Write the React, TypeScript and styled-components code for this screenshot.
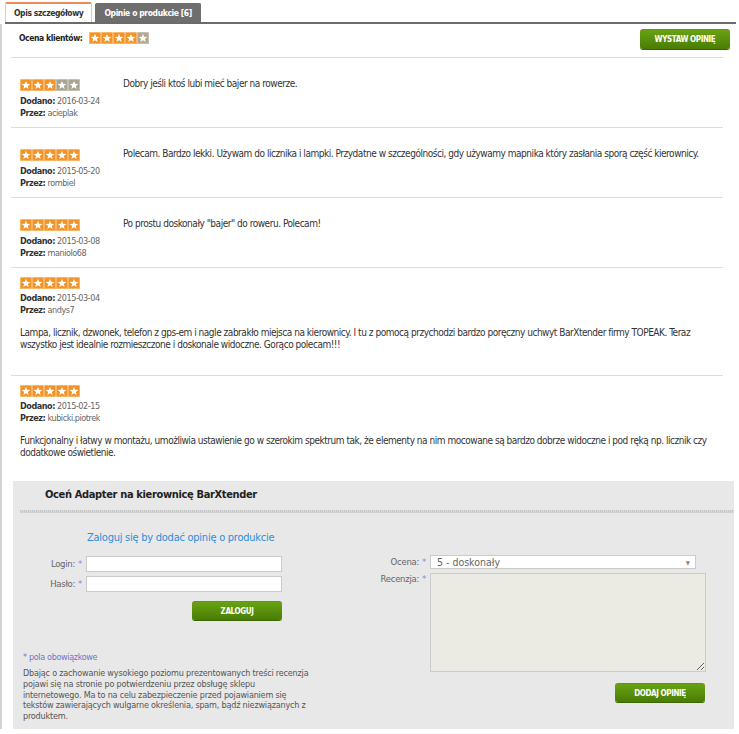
import React from 'react';
import styled, { createGlobalStyle } from 'styled-components';

const FONT = `"DejaVu Sans Condensed", "DejaVu Sans", Verdana, sans-serif`;

const GlobalStyle = createGlobalStyle`
  html, body {
    margin: 0;
    padding: 0;
    background: #fff;
  }
  body {
    font-family: ${FONT};
    font-size: 11px;
    color: #333;
  }
`;

const Page = styled.div`
  width: 739px;
`;

const TabBar = styled.div`
  display: flex;
  align-items: flex-end;
  gap: 3px;
  margin: 0 3px 0 5px;
  padding-top: 2px;
  border-bottom: 2px solid #6b6b6b;
`;

const Tab = styled.div<{ $active?: boolean }>`
  box-sizing: border-box;
  height: ${({ $active }) => ($active ? '20px' : '19px')};
  padding: 0 8px;
  display: flex;
  align-items: center;
  font-size: 8.5px;
  letter-spacing: -0.4px;
  font-weight: bold;
  border-radius: 2px 2px 0 0;
  color: ${({ $active }) => ($active ? '#333' : '#fff')};
  background: ${({ $active }) => ($active ? '#fff' : '#6e6e6e')};
  border: 1px solid ${({ $active }) => ($active ? '#cfcfcf' : '#6e6e6e')};
  border-top: ${({ $active }) => ($active ? '2px solid #ec8a5a' : '1px solid #6e6e6e')};
  border-bottom: none;
`;

const Content = styled.div`
  border-left: 2px solid #d2d2d2;
`;

const Summary = styled.div`
  display: flex;
  align-items: center;
  justify-content: space-between;
  padding: 5px 9px 8px 17px;
`;

const SummaryLeft = styled.div`
  display: flex;
  align-items: center;
  gap: 7px;
  margin-bottom: 3px;
  font-size: 8.5px;
  letter-spacing: -0.4px;
  font-weight: bold;
  color: #222;
`;

const GreenButton = styled.button`
  box-sizing: border-box;
  width: 90px;
  height: ${({ $h }: { $h?: number }) => $h ?? 19}px;
  padding: 0;
  border: none;
  border-top: 1px solid #c8574a;
  border-radius: 3px;
  background: linear-gradient(#67a312, #4a7c05);
  box-shadow: 0 1px 0 #3d6604;
  color: #fff;
  font-family: ${FONT};
  font-size: 8px;
  font-weight: bold;
  letter-spacing: -0.4px;
  cursor: pointer;
`;

const ReviewItem = styled.div<{ $block?: boolean; $last?: boolean }>`
  margin: 0 16px 0 9px;
  padding: ${({ $block, $last }) =>
    $block ? `9px 0 ${$last ? 22 : 24}px 9px` : '21px 0 8px 9px'};
  border-top: 1px solid #dcdcdc;
  display: ${({ $block }) => ($block ? 'block' : 'flex')};
`;

const Meta = styled.div`
  width: 103px;
  flex-shrink: 0;
`;

const MetaLines = styled.div<{ $gap: number }>`
  margin-top: ${({ $gap }) => $gap}px;
`;

const MetaLine = styled.div`
  line-height: 12px;
  font-size: 9px;
  letter-spacing: -0.45px;
  color: #666;

  b {
    color: #333;
  }
`;

const ReviewText = styled.p<{ $block?: boolean }>`
  margin: ${({ $block }) => ($block ? '11px 0 0' : '-1px 0 0')};
  line-height: 12px;
  font-size: 10px;
  letter-spacing: -0.47px;
  color: #333;
`;

const FormBox = styled.section`
  margin: 0 5px 0 11px;
  background: #e8e8e8;
  padding-bottom: 7px;
`;

const FormHeading = styled.h3`
  margin: 0;
  padding-left: 32px;
  height: 29px;
  line-height: 27px;
  font-size: 11px;
  letter-spacing: -0.35px;
  font-weight: bold;
  color: #222;
`;

const Hatch = styled.div`
  margin-left: 7px;
  height: 3px;
  background:
    repeating-linear-gradient(90deg, #c6c6c6 0 1px, #dadada 1px 2px);
`;

const FormBody = styled.div`
  display: grid;
  grid-template-columns: 357px 1fr;
`;

const LeftCol = styled.div`
  padding: 17px 0 0 10px;
`;

const RightCol = styled.div`
  padding-top: 42px;
`;

const LoginTitle = styled.div`
  padding-left: 64px;
  line-height: 16px;
  font-size: 11px;
  letter-spacing: -0.25px;
  color: #2b8edb;
  margin-bottom: 10px;
`;

const FieldRow = styled.div<{ $top?: boolean; $label: number }>`
  display: grid;
  grid-template-columns: ${({ $label }) => $label}px auto;
  align-items: ${({ $top }) => ($top ? 'start' : 'center')};
  column-gap: 4px;
  margin-bottom: 4px;
`;

const FieldLabel = styled.label`
  text-align: right;
  font-size: 9.5px;
  letter-spacing: -0.3px;
  line-height: 12px;
  color: #666;
`;

const Req = styled.span`
  color: #8a8ad8;
  margin-left: 3px;
`;

const TextInput = styled.input`
  box-sizing: border-box;
  width: 196px;
  height: 16px;
  margin: 0;
  border: 1px solid #cbcbcb;
  background: #fff;
  outline: none;
`;

const SelectBox = styled.div`
  box-sizing: border-box;
  width: 266px;
  height: 14px;
  border: 1px solid #cbcbcb;
  background: #fff;
  display: flex;
  align-items: center;
  justify-content: space-between;
  padding: 0 5px 0 6px;
  font-size: 10.5px;
  color: #666;
`;

const Arrow = styled.span`
  font-size: 6px;
  color: #888;
`;

const Review = styled.textarea`
  display: block;
  box-sizing: border-box;
  width: 276px;
  height: 99px;
  margin: 0;
  border: 1px solid #cbcbcb;
  background: #ebeae3;
  outline: none;
`;

const ButtonRow = styled.div<{ $left: number; $top: number }>`
  padding-left: ${({ $left }) => $left}px;
  margin-top: ${({ $top }) => $top}px;
  line-height: 0;
`;

const RequiredNote = styled.div`
  margin-top: 31px;
  line-height: 12px;
  font-size: 9px;
  letter-spacing: -0.35px;
  color: #7474c8;
`;

const Notice = styled.p`
  margin: 5px 0 0;
  white-space: nowrap;
  line-height: 10.8px;
  font-size: 9px;
  letter-spacing: -0.2px;
  color: #555;
`;

const starPoints = (cx: number, cy: number, R: number, r: number) => {
  const pts: string[] = [];
  for (let i = 0; i < 10; i++) {
    const a = -Math.PI / 2 + (i * Math.PI) / 5;
    const rad = i % 2 === 0 ? R : r;
    pts.push(`${(cx + rad * Math.cos(a)).toFixed(2)},${(cy + rad * Math.sin(a)).toFixed(2)}`);
  }
  return pts.join(' ');
};

const Stars: React.FC<{ value: number; muted?: string }> = ({ value, muted = '#a9a391' }) => (
  <svg width="60" height="12" viewBox="0 0 60 12" style={{ display: 'block' }}>
    {[0, 1, 2, 3, 4].map((i) => (
      <g key={i}>
        <rect
          x={i * 12}
          y={0}
          width={12}
          height={12}
          rx={1.5}
          fill={i < value ? '#f39325' : muted}
        />
        <rect
          x={i * 12 + 0.5}
          y={0.5}
          width={11}
          height={11}
          rx={1.5}
          fill="none"
          stroke={i < value ? '#f8b767' : '#c4bfae'}
          strokeWidth={1}
        />
        <polygon points={starPoints(i * 12 + 6, 6.4, 4.6, 1.9)} fill="#fff" />
      </g>
    ))}
  </svg>
);

type ReviewData = {
  value: number;
  date: string;
  author: string;
  text: string;
  block?: boolean;
};

const reviews: ReviewData[] = [
  {
    value: 3,
    date: '2016-03-24',
    author: 'acieplak',
    text: 'Dobry jeśli ktoś lubi mieć bajer na rowerze.',
  },
  {
    value: 5,
    date: '2015-05-20',
    author: 'rombiel',
    text: 'Polecam. Bardzo lekki. Używam do licznika i lampki. Przydatne w szczególności, gdy używamy mapnika który zasłania sporą część kierownicy.',
  },
  {
    value: 5,
    date: '2015-03-08',
    author: 'maniolo68',
    text: 'Po prostu doskonały "bajer" do roweru. Polecam!',
  },
  {
    value: 5,
    date: '2015-03-04',
    author: 'andys7',
    text: 'Lampa, licznik, dzwonek, telefon z gps-em i nagle zabrakło miejsca na kierownicy. I tu z pomocą przychodzi bardzo poręczny uchwyt BarXtender firmy TOPEAK. Teraz wszystko jest idealnie rozmieszczone i doskonale widoczne. Gorąco polecam!!!',
    block: true,
  },
  {
    value: 5,
    date: '2015-02-15',
    author: 'kubicki.piotrek',
    text: 'Funkcjonalny i łatwy w montażu, umożliwia ustawienie go w szerokim spektrum tak, że elementy na nim mocowane są bardzo dobrze widoczne i pod ręką np. licznik czy dodatkowe oświetlenie.',
    block: true,
  },
];

const App: React.FC = () => {
  return (
    <Page>
      <GlobalStyle />
      <TabBar>
        <Tab $active>Opis szczegółowy</Tab>
        <Tab>Opinie o produkcie [6]</Tab>
      </TabBar>
      <Content>
        <Summary>
          <SummaryLeft>
            Ocena klientów:
            <Stars value={4} muted="#b3a78d" />
          </SummaryLeft>
          <GreenButton $h={20}>WYSTAW OPINIĘ</GreenButton>
        </Summary>

        {reviews.map((r, idx) => (
          <ReviewItem key={idx} $block={r.block} $last={idx === reviews.length - 1}>
            <Meta>
              <Stars value={r.value} />
              <MetaLines $gap={r.block ? 3 : 4}>
                <MetaLine>
                  <b>Dodano:</b> {r.date}
                </MetaLine>
                <MetaLine>
                  <b>Przez:</b> {r.author}
                </MetaLine>
              </MetaLines>
            </Meta>
            <ReviewText $block={r.block}>{r.text}</ReviewText>
          </ReviewItem>
        ))}

        <FormBox>
          <FormHeading>Oceń Adapter na kierownicę BarXtender</FormHeading>
          <Hatch />
          <FormBody>
            <LeftCol>
              <LoginTitle>Zaloguj się by dodać opinię o produkcie</LoginTitle>
              <FieldRow $label={59}>
                <FieldLabel>
                  Login:<Req>*</Req>
                </FieldLabel>
                <TextInput type="text" />
              </FieldRow>
              <FieldRow $label={59}>
                <FieldLabel>
                  Hasło:<Req>*</Req>
                </FieldLabel>
                <TextInput type="password" />
              </FieldRow>
              <ButtonRow $left={169} $top={9}>
                <GreenButton>ZALOGUJ</GreenButton>
              </ButtonRow>
              <RequiredNote>* pola obowiązkowe</RequiredNote>
              <Notice>
                Dbając o zachowanie wysokiego poziomu prezentowanych treści recenzja
                <br />
                pojawi się na stronie po potwierdzeniu przez obsługę sklepu
                <br />
                internetowego. Ma to na celu zabezpieczenie przed pojawianiem się
                <br />
                tekstów zawierających wulgarne określenia, spam, bądź niezwiązanych z
                <br />
                produktem.
              </Notice>
            </LeftCol>
            <RightCol>
              <FieldRow $label={56}>
                <FieldLabel>
                  Ocena:<Req>*</Req>
                </FieldLabel>
                <SelectBox>
                  5 - doskonały
                  <Arrow>▼</Arrow>
                </SelectBox>
              </FieldRow>
              <FieldRow $label={56} $top>
                <FieldLabel>
                  Recenzja:<Req>*</Req>
                </FieldLabel>
                <Review />
              </FieldRow>
              <ButtonRow $left={245} $top={11}>
                <GreenButton>DODAJ OPINIĘ</GreenButton>
              </ButtonRow>
            </RightCol>
          </FormBody>
        </FormBox>
      </Content>
    </Page>
  );
};

export default App;
